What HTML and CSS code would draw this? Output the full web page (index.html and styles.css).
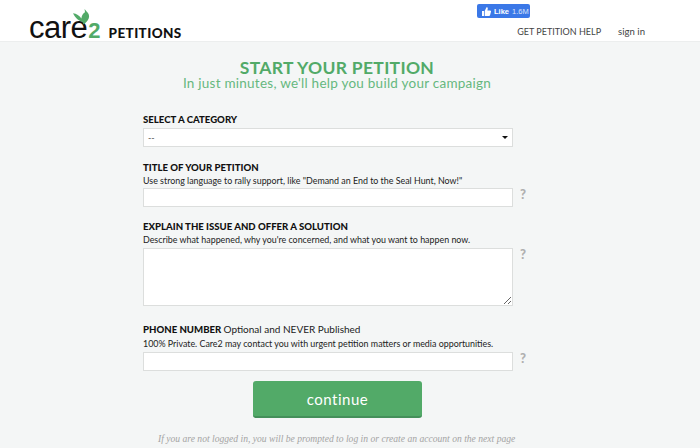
FILE: index.html
```html
<!DOCTYPE html>
<html lang="en">
<head>
  <meta charset="UTF-8" />
  <meta name="viewport" content="width=device-width, initial-scale=1.0" />
  <title>Start Your Petition</title>
  <link rel="stylesheet" href="styles.css">
</head>
<body>
  <div class="top-nav">
    <a href="#" class="logo">
      <span class="logo-word">care</span><span class="logo-two">2</span>
      <svg class="logo-leaf" width="17" height="16" viewBox="0 0 17 16">
        <path d="M0 4.2 C3.5 4.6 6.5 6.6 8.4 9.4 C8.6 6.6 10 4.4 12 3.2 L11.6 0 L13.6 2.4 C15.8 4 16.8 7 15.6 9.8 C14.4 12.4 12.6 13.8 10.6 15.6 C10.2 14.6 9.8 13.6 9 12.6 C5.4 11.8 2 8.4 0 4.2 Z" fill="#52aa68"/>
      </svg>
      <span class="logo-label">PETITIONS</span>
    </a>
    <div class="top-right">
      <button class="like">
        <svg width="9" height="9" viewBox="0 0 10 10">
          <path d="M0 4.4h2.2V10H0z M3 4.4 L5 0.4 C6 0.2 6.6 1 6.4 2 L6 3.8 H9 C9.8 3.8 10.2 4.5 10 5.2 L9 9 C8.8 9.6 8.4 10 7.8 10 H3 Z" fill="white"/>
        </svg>
        <b>Like</b> <span>1.6M</span>
      </button>
      <div class="top-links">
        <a href="#">GET PETITION HELP</a>
        <a href="#">sign in</a>
      </div>
    </div>
  </div>

  <div class="main-content">
    <h1>START YOUR PETITION</h1>
    <h2>In just minutes, we'll help you build your campaign</h2>

    <form class="petition-form">
      <div class="field field-select">
        <label>SELECT A CATEGORY</label>
        <div class="row">
          <div class="select-box">
            <span>--</span>
            <i class="caret"></i>
          </div>
        </div>
      </div>

      <div class="field field-title">
        <label>TITLE OF YOUR PETITION</label>
        <p>Use strong language to rally support, like "Demand an End to the Seal Hunt, Now!"</p>
        <div class="row">
          <input type="text" />
          <span class="help">?</span>
        </div>
      </div>

      <div class="field field-issue">
        <label>EXPLAIN THE ISSUE AND OFFER A SOLUTION</label>
        <p>Describe what happened, why you're concerned, and what you want to happen now.</p>
        <div class="row">
          <textarea></textarea>
          <span class="help">?</span>
        </div>
      </div>

      <div class="field field-phone">
        <label>PHONE NUMBER <span>Optional and NEVER Published</span></label>
        <p>100% Private. Care2 may contact you with urgent petition matters or media opportunities.</p>
        <div class="row">
          <input type="text" />
          <span class="help">?</span>
        </div>
      </div>

      <button type="button" class="continue">continue</button>
      <p class="note">If you are not logged in, you will be prompted to log in or create an account on the next page</p>
    </form>
  </div>
</body>
</html>
```

FILE: styles.css
```css
* {
  margin: 0;
  padding: 0;
  box-sizing: border-box;
  font-family: "Lato", "Liberation Sans", sans-serif;
}

body {
  background-color: #f4f6f6;
  color: #111;
  overflow: hidden;
}

.top-nav {
  display: flex;
  justify-content: space-between;
  height: 42px;
  background-color: white;
  border-bottom: 1px solid #eceeee;
  padding-left: 29px;
  padding-right: 55px;
}

.logo {
  position: relative;
  display: flex;
  align-items: baseline;
  height: 41px;
  color: #111;
  text-decoration: none;
  padding-top: 12px;
}

.logo-word {
  font-family: "Liberation Sans", sans-serif;
  font-size: 31px;
  line-height: 31px;
  letter-spacing: -0.5px;
}

.logo-two {
  font-family: "Liberation Sans", sans-serif;
  font-size: 22px;
  line-height: 31px;
  font-weight: bold;
  color: #52aa68;
  margin-left: 1px;
}

.logo-leaf {
  position: absolute;
  left: 44px;
  top: 9px;
}

.logo-label {
  font-size: 13.5px;
  font-weight: 900;
  letter-spacing: 0.4px;
  margin-left: 8px;
}

.top-right {
  display: flex;
  flex-direction: column;
  width: 168px;
  padding-top: 4px;
}

.like {
  display: flex;
  align-items: center;
  gap: 3px;
  width: 53px;
  height: 14px;
  background-color: #3b78e7;
  color: white;
  border: none;
  border-radius: 2px;
  font-size: 7.5px;
  padding-left: 5px;
}

.like b, .like span {
  font-family: "Liberation Sans", sans-serif;
}

.like span {
  opacity: 0.8;
}

.top-links {
  display: flex;
  justify-content: flex-end;
  gap: 17px;
  margin-top: 7px;
}

.top-links a {
  color: #444;
  font-size: 9px;
  line-height: 14px;
  text-decoration: none;
  white-space: nowrap;
}

.top-links a:last-child {
  font-size: 9.6px;
}

.main-content {
  width: 388px;
  margin-left: 143px;
  padding-top: 17px;
}

h1 {
  text-align: center;
  color: #52aa68;
  font-size: 17.5px;
  line-height: 17px;
  font-weight: 700;
  letter-spacing: 0.3px;
}

h2 {
  text-align: center;
  color: #66b87e;
  font-size: 13.5px;
  line-height: 14px;
  font-weight: 400;
  letter-spacing: 0.25px;
}

.petition-form {
  margin-top: 23px;
}

.field label {
  display: block;
  font-size: 9.6px;
  line-height: 14px;
  font-weight: 900;
  color: #111;
}

.field label span {
  font-size: 10px;
  font-weight: 400;
  color: #222;
}

.field p {
  font-size: 8.9px;
  line-height: 12px;
  color: #222;
  margin-bottom: 1px;
}

.field-issue p {
  margin-bottom: 2px;
}

.field-phone p {
  margin-top: 1px;
  margin-bottom: 2px;
}

.row {
  display: flex;
  align-items: flex-start;
}

.select-box, input, textarea {
  display: block;
  width: 370px;
  background-color: white;
  border: 1px solid #dcdedd;
  outline: none;
}

.select-box {
  display: flex;
  align-items: center;
  justify-content: space-between;
  height: 19px;
  margin-top: 1px;
  padding: 0 4px;
  font-size: 9px;
  color: #555;
}

.caret {
  border-left: 3px solid transparent;
  border-right: 3px solid transparent;
  border-top: 3px solid #111;
}

input {
  height: 19px;
}

textarea {
  height: 58px;
}

.help {
  color: #b0b0b0;
  font-size: 13px;
  line-height: 14px;
  font-weight: 900;
  margin-left: 7px;
  margin-top: -1px;
}

.field-title {
  margin-top: 14px;
}

.field-issue {
  margin-top: 13px;
}

.field-phone {
  margin-top: 16px;
}

.continue {
  display: block;
  width: 169px;
  height: 37px;
  margin: 10px 0 0 110px;
  background-color: #52aa68;
  border: none;
  border-bottom: 2px solid #44905a;
  border-radius: 3px;
  color: white;
  font-size: 15px;
  letter-spacing: 0.5px;
}

.note {
  font-family: "Liberation Serif", serif;
  font-style: italic;
  font-size: 9.6px;
  line-height: 12px;
  color: #a4a4a4;
  margin-top: 15px;
  margin-left: 15px;
  white-space: nowrap;
}
```
